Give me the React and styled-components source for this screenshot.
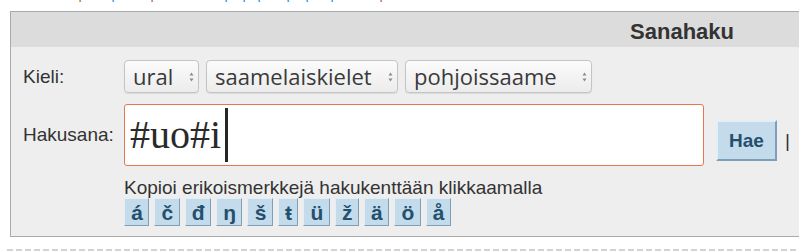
import React from "react";
import styled, { createGlobalStyle } from "styled-components";

const Global = createGlobalStyle`
  html, body { margin: 0; padding: 0; background: #fff; overflow: hidden; }
  body { font-family: "Liberation Sans", Arial, sans-serif; color: #333; }
`;

const Page = styled.div`
  width: 799px;
  height: 252px;
  overflow: hidden;
`;

const Strip = styled.div`
  height: 3px;
  overflow: hidden;
`;

const StripLine = styled.div`
  display: flex;
  margin-top: -15px;
  font-size: 16px;
  line-height: 18px;
  white-space: nowrap;
`;

const Mark = styled.span`
  display: inline-block;
  width: 4px;
  text-align: center;
  margin-left: ${(p) => p.$gap}px;
  color: ${(p) => (p.$sep ? "#b07050" : "#3b8fd8")};
`;

const Panel = styled.section`
  margin: 8px 0 0 10px;
  width: 840px;
  border: 1px solid #aaaaaa;
  background: #eeeeee;
`;

const Header = styled.div`
  height: 35px;
  box-sizing: border-box;
  padding: 4px 117px 0 0;
  background: #dcdcdc;
  display: flex;
  justify-content: flex-end;
  font-size: 22px;
  line-height: 31px;
  font-weight: bold;
  color: #333;
`;

const Form = styled.div`
  display: grid;
  grid-template-columns: 101px 1fr;
  row-gap: 11px;
  padding: 13px 0 10px 12px;
`;

const Label = styled.div`
  align-self: center;
  font-size: 19px;
  color: #333;
`;

const SelectRow = styled.div`
  display: flex;
  gap: 7px;
`;

const Picker = styled.div`
  box-sizing: border-box;
  width: ${(p) => p.$w}px;
  height: 33px;
  display: flex;
  align-items: center;
  justify-content: space-between;
  padding: 0 4px 0 8px;
  border: 1px solid #c4c4c4;
  border-radius: 4px;
  background: linear-gradient(#fbfbfb, #ececec);
  box-shadow: 0 1px 1px rgba(0, 0, 0, 0.08);
  font-family: "Open Sans", "Noto Sans", sans-serif;
  font-size: 22px;
  line-height: 31px;
  color: #3a3a3a;
`;

const Arrows = () => (
  <svg width="5" height="12" viewBox="0 0 5 12">
    <path d="M0.5 4.5 L2.5 1.5 L4.5 4.5 Z M0.5 7.5 L2.5 10.5 L4.5 7.5 Z" fill="#8a8a8a" />
  </svg>
);

const SearchRow = styled.div`
  display: flex;
  gap: 12px;
`;

const Field = styled.div`
  box-sizing: border-box;
  width: 580px;
  height: 62px;
  display: flex;
  align-items: center;
  padding-left: 5px;
  border: 1px solid #e5764f;
  border-radius: 3px;
  background: #fff;
`;

const Value = styled.span`
  font-family: "Liberation Serif", "Times New Roman", serif;
  font-size: 40px;
  line-height: 60px;
  color: #2a2a2a;
`;

const Caret = styled.span`
  display: block;
  width: 3px;
  height: 54px;
  margin-left: 4px;
  background: #262626;
`;

const Actions = styled.div`
  align-self: flex-end;
  margin-bottom: 5px;
  display: flex;
  align-items: center;
  gap: 8px;
`;

const Button = styled.button`
  box-sizing: border-box;
  height: ${(p) => p.$h}px;
  ${(p) => (p.$w ? `width: ${p.$w}px;` : "padding: 0 5.3px 0 6.3px;")}
  margin: 0;
  border: ${(p) => p.$b}px solid;
  border-color: #e4eef6 #7f9fb9 #7f9fb9 #e4eef6;
  background: #c4dbec;
  color: #24506f;
  font-family: "Liberation Sans", Arial, sans-serif;
  font-weight: bold;
  font-size: ${(p) => p.$fs}px;
  line-height: 1;
  cursor: pointer;
`;

const Pipe = styled.span`
  font-size: 19px;
  color: #333;
`;

const Helper = styled.div`
  display: flex;
  flex-direction: column;
`;

const Hint = styled.div`
  font-size: 19px;
  line-height: 21px;
  color: #333;
`;

const Chars = styled.div`
  display: flex;
  gap: 5px;
`;

const Divider = styled.div`
  margin: 12px 0 0 7px;
  height: 2px;
  background: repeating-linear-gradient(90deg, #d2d2d2 0 6px, transparent 6px 9px);
`;

const marks = [
  [78, true], [29, false], [35, true], [70, false], [14, false],
  [11, false], [25, false], [15, false], [21, false], [45, true],
];

const letters = ["á", "č", "đ", "ŋ", "š", "ŧ", "ü", "ž", "ä", "ö", "å"];

export default function App() {
  return (
    <Page>
      <Global />
      <Strip>
        <StripLine>
          {marks.map(([g, s], i) => (
            <Mark key={i} $gap={g} $sep={s}>|</Mark>
          ))}
        </StripLine>
      </Strip>
      <Panel>
        <Header>Sanahaku</Header>
        <Form>
          <Label>Kieli:</Label>
          <SelectRow>
            <Picker $w={75}><span>ural</span><Arrows /></Picker>
            <Picker $w={192}><span>saamelaiskielet</span><Arrows /></Picker>
            <Picker $w={187}><span>pohjoissaame</span><Arrows /></Picker>
          </SelectRow>

          <Label>Hakusana:</Label>
          <SearchRow>
            <Field>
              <Value>#uo#i</Value>
              <Caret />
            </Field>
            <Actions>
              <Button $w={61} $h={41} $b={2} $fs={19}>Hae</Button>
              <Pipe>|</Pipe>
            </Actions>
          </SearchRow>

          <div />
          <Helper>
            <Hint>Kopioi erikoismerkkejä hakukenttään klikkaamalla</Hint>
            <Chars>
              {letters.map((c) => (
                <Button key={c} $h={28} $b={1} $fs={21}>{c}</Button>
              ))}
            </Chars>
          </Helper>
        </Form>
      </Panel>
      <Divider />
    </Page>
  );
}
